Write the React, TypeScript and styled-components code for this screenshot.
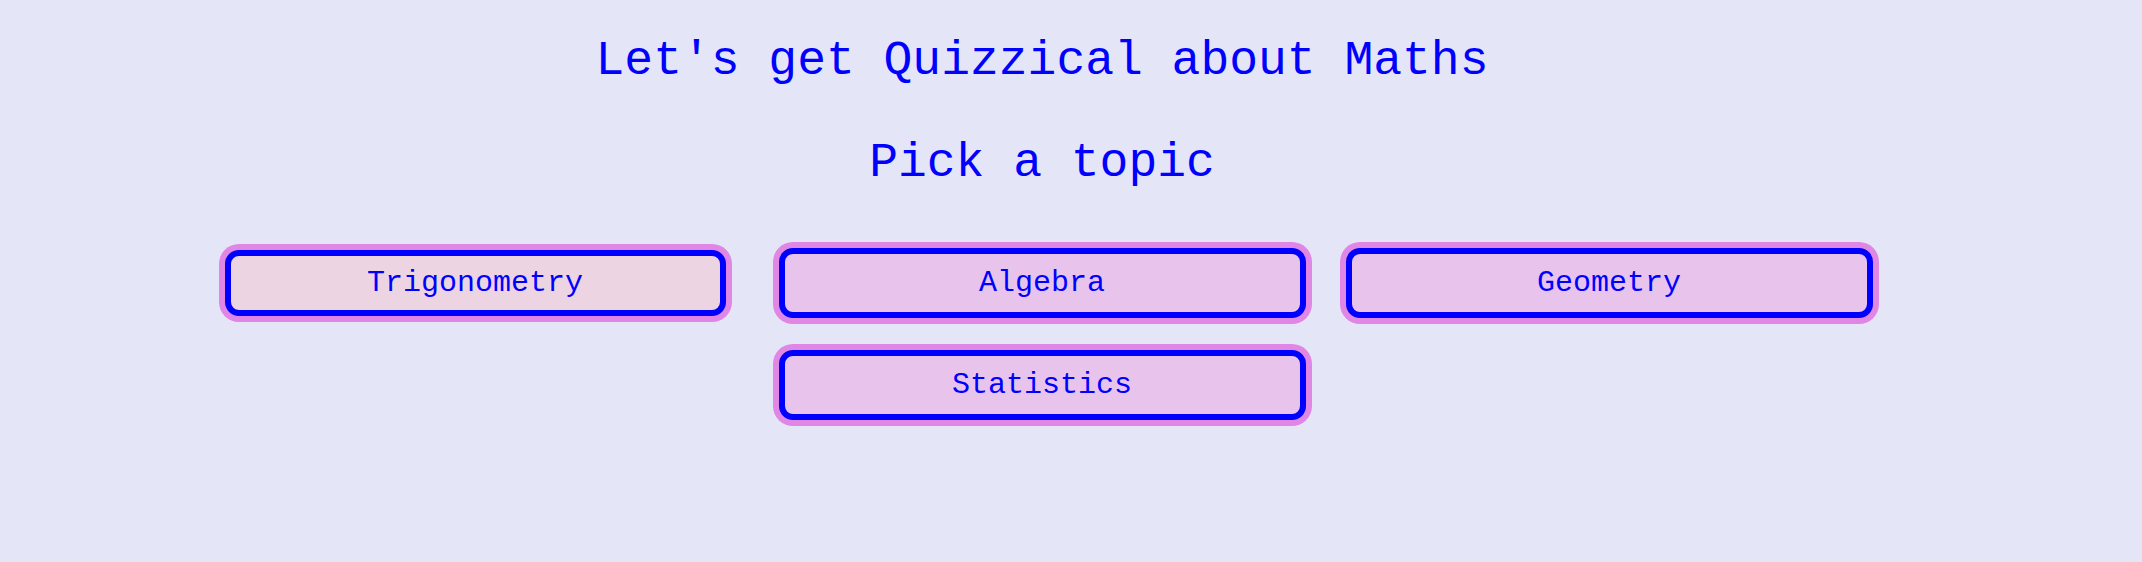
import React from "react";
import styled, { createGlobalStyle } from "styled-components";

const GlobalStyle = createGlobalStyle`
  html, body {
    margin: 0;
    padding: 0;
    background: #e5e5f8;
  }
  body {
    font-family: "Liberation Mono", "DejaVu Sans Mono", monospace;
  }
`;

const Page = styled.main`
  width: 2084px;
  min-height: 562px;
  display: flex;
  flex-direction: column;
  align-items: center;
  color: #0000ff;
`;

const Title = styled.h1`
  margin: 34px 0 0;
  font-size: 48px;
  line-height: 54px;
  font-weight: 400;
`;

const Subtitle = styled.h2`
  margin: 48px 0 0;
  font-size: 48px;
  line-height: 54px;
  font-weight: 400;
`;

const TopicGrid = styled.div`
  margin-top: 58px;
  display: grid;
  grid-template-columns: repeat(3, 527px);
  column-gap: 40px;
  row-gap: 32px;
`;

const TopicButton = styled.button<{ $active?: boolean; $col?: number }>`
  box-sizing: border-box;
  height: ${(p) => (p.$active ? "66px" : "70px")};
  margin: ${(p) => (p.$active ? "2px 13px" : "0")};
  grid-column: ${(p) => p.$col ?? "auto"};
  border: 6px solid #0000ff;
  border-radius: 14px;
  box-shadow: 0 0 0 6px #e086e4;
  background: ${(p) => (p.$active ? "#edd4e3" : "#e8c4ed")};
  color: #0000ff;
  font-family: "Liberation Mono", "DejaVu Sans Mono", monospace;
  font-size: 30px;
  cursor: pointer;
  padding: 0;
`;

export default function App() {
  return (
    <>
      <GlobalStyle />
      <Page>
        <Title>Let's get Quizzical about Maths</Title>
        <Subtitle>Pick a topic</Subtitle>
        <TopicGrid>
          <TopicButton $active>Trigonometry</TopicButton>
          <TopicButton>Algebra</TopicButton>
          <TopicButton>Geometry</TopicButton>
          <TopicButton $col={2}>Statistics</TopicButton>
        </TopicGrid>
      </Page>
    </>
  );
}
